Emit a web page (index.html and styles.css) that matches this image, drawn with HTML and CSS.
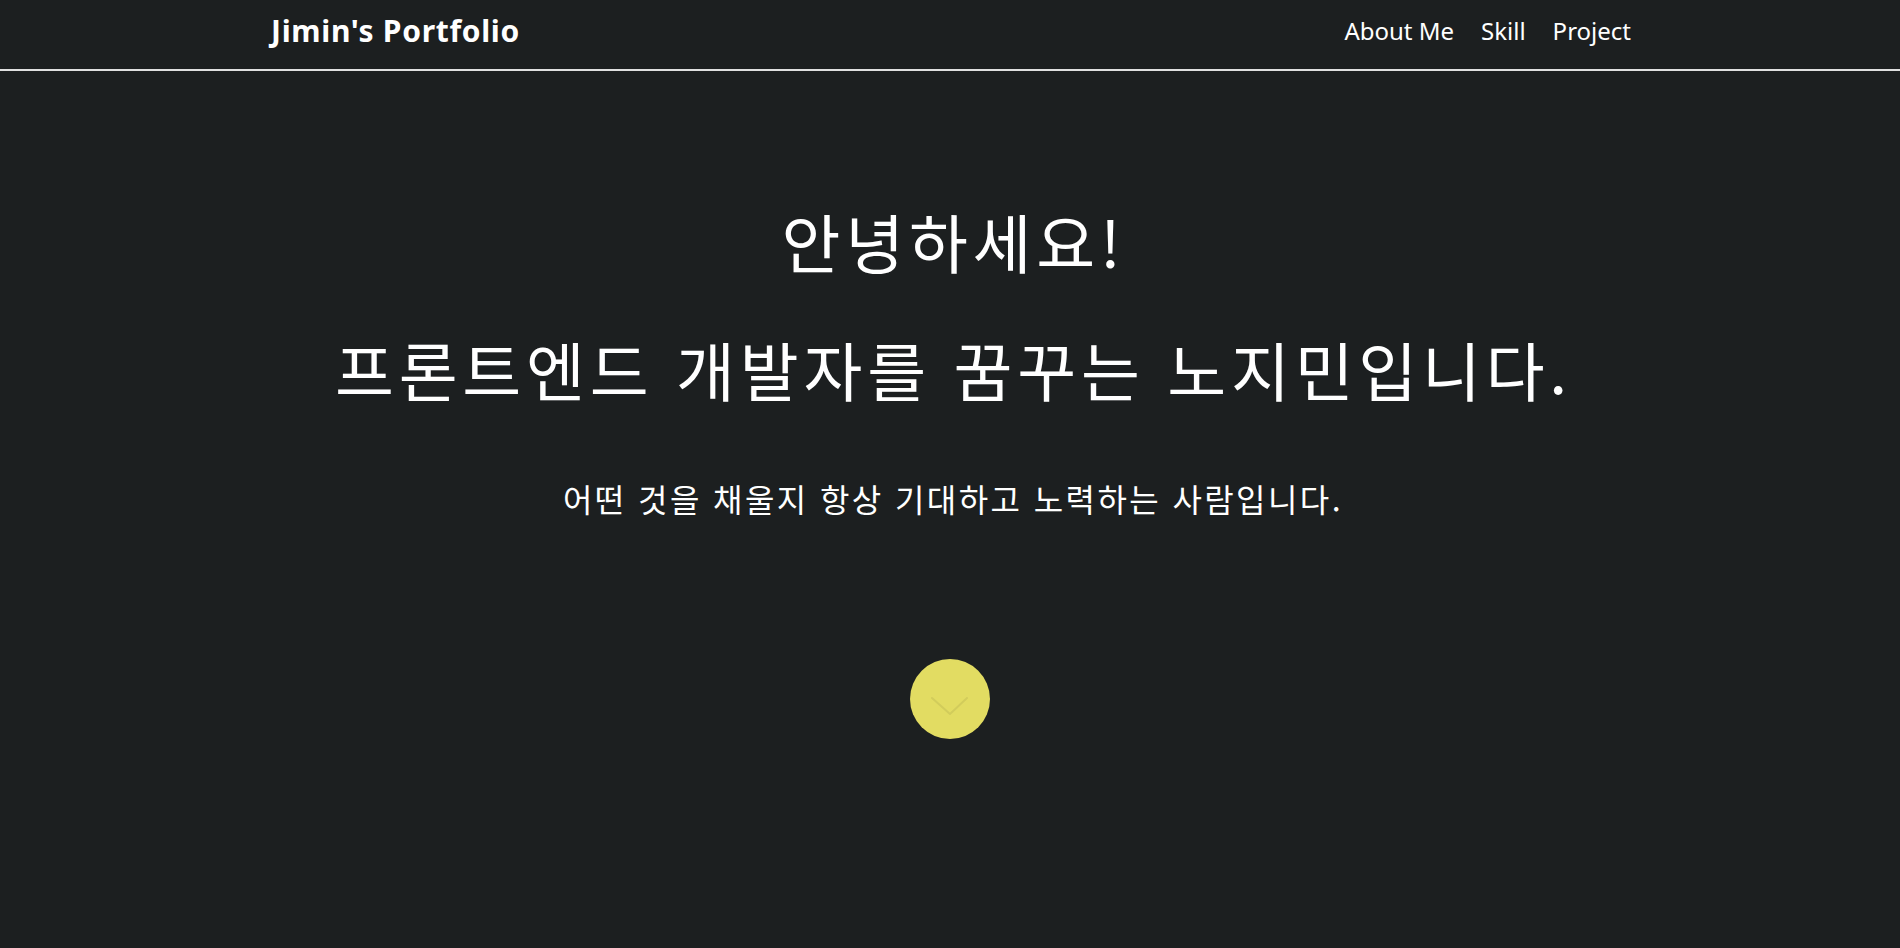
FILE: index.html
```html
<!DOCTYPE html>
<html lang="ko">
<head>
<meta charset="utf-8">
<title>Jimin's Portfolio</title>
<link rel="stylesheet" href="styles.css">
</head>
<body>
<header class="header">
  <div class="header-inner">
    <a class="logo" href="#">Jimin's Portfolio</a>
    <nav class="nav">
      <a class="nav-link" href="#">About Me</a>
      <a class="nav-link" href="#">Skill</a>
      <a class="nav-link" href="#">Project</a>
    </nav>
  </div>
</header>
<main class="hero">
  <h1 class="hero-title">안녕하세요!<br>프론트엔드 개발자를 꿈꾸는 노지민입니다.</h1>
  <p class="hero-sub">어떤 것을 채울지 항상 기대하고 노력하는 사람입니다.</p>
  <button class="down-btn" type="button" aria-label="아래로">
    <svg class="down-icon" width="80" height="80" viewBox="0 0 80 80" fill="none">
      <path d="M22 39 L40 55 L57 39" stroke="rgba(0,0,0,0.07)" stroke-width="2" stroke-linecap="round" stroke-linejoin="round"/>
    </svg>
  </button>
</main>
</body>
</html>
```

FILE: styles.css
```css
html, body {
  margin: 0;
  padding: 0;
}

body {
  background: #1c1f20;
  color: #ffffff;
  font-family: "Noto Sans", "Noto Sans CJK KR", sans-serif;
  min-height: 948px;
}

.header {
  height: 69px;
  border-bottom: 2px solid #e0e0e0;
}

.header-inner {
  width: 1362px;
  height: 100%;
  margin: 0 auto;
  display: flex;
  justify-content: space-between;
  align-items: center;
  box-sizing: border-box;
  padding: 0 0 9px 2px;
}

.logo {
  color: #ffffff;
  text-decoration: none;
  font-weight: 700;
  font-size: 30px;
  letter-spacing: 0.7px;
}

.nav {
  display: flex;
  gap: 27px;
}

.nav-link {
  color: #ffffff;
  text-decoration: none;
  font-size: 24px;
}

.hero {
  text-align: center;
  font-family: "Noto Sans CJK KR", sans-serif;
}

.hero-title {
  margin: 105px 0 0;
  padding-left: 7px;
  font-size: 64px;
  font-weight: 400;
  line-height: 128px;
  letter-spacing: 4.8px;
}

.hero-sub {
  margin: 42px 0 0;
  padding-left: 6px;
  font-size: 32px;
  line-height: 48px;
  letter-spacing: 2.4px;
}

.down-btn {
  display: block;
  margin: 137px auto 0;
  width: 80px;
  height: 80px;
  padding: 0;
  border: none;
  border-radius: 50%;
  background: #e2dc62;
  cursor: pointer;
}

.down-icon {
  display: block;
}
```
